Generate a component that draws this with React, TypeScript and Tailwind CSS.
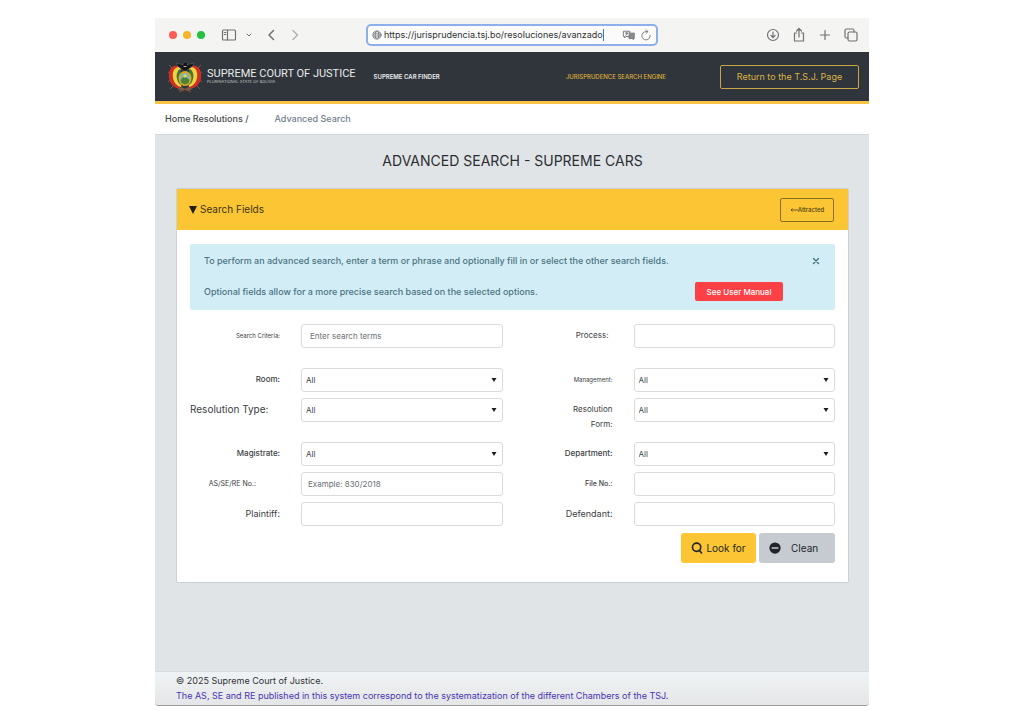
import type { ReactNode } from "react";

type Field = {
  id: string;
  label: string;
  labelClass: string;
  kind: "text" | "select";
  placeholder?: string;
  fieldClass?: string;
};

const rows: { tall?: boolean; fields: Field[] }[] = [
  {
    tall: true,
    fields: [
      { id: "criteria", label: "Search Criteria:", labelClass: "text-[6px] text-right", kind: "text", placeholder: "Enter search terms", fieldClass: "pl-2 text-[8px]" },
      { id: "process", label: "Process:", labelClass: "text-[8px] text-right pr-1", kind: "text" },
    ],
  },
  {
    fields: [
      { id: "room", label: "Room:", labelClass: "text-[8px] font-medium text-right", kind: "select" },
      { id: "management", label: "Management:", labelClass: "text-[6px] text-right", kind: "select" },
    ],
  },
  {
    tall: true,
    fields: [
      { id: "type", label: "Resolution Type:", labelClass: "text-[10px] whitespace-nowrap text-left", kind: "select" },
      { id: "form", label: "Resolution Form:", labelClass: "text-[8px] text-right pl-8", kind: "select" },
    ],
  },
  {
    fields: [
      { id: "magistrate", label: "Magistrate:", labelClass: "text-[8px] font-medium text-right", kind: "select" },
      { id: "department", label: "Department:", labelClass: "text-[8px] font-medium text-right", kind: "select" },
    ],
  },
  {
    fields: [
      { id: "number", label: "AS/SE/RE No.:", labelClass: "text-[7px] text-right pr-6", kind: "text", placeholder: "Example: 830/2018", fieldClass: "pl-1.5 text-[8px]" },
      { id: "file", label: "File No.:", labelClass: "text-[7px] font-medium text-right", kind: "text" },
    ],
  },
  {
    fields: [
      { id: "plaintiff", label: "Plaintiff:", labelClass: "text-[9px] text-right", kind: "text" },
      { id: "defendant", label: "Defendant:", labelClass: "text-[9px] text-right", kind: "text" },
    ],
  },
];

function FormField({ field }: { field: Field }) {
  return (
    <div className="grid grid-cols-[90px_minmax(0,1fr)] items-start gap-x-[21px]">
      <label htmlFor={field.id} className={`py-1 leading-[15px] text-[#3c4043] ${field.labelClass}`}>
        {field.label}
      </label>
      {field.kind === "select" ? (
        <div className="relative">
          <select id={field.id} className="block h-6 w-full appearance-none rounded-[3px] border border-[#d9dbdd] bg-white pl-1 text-[8px] text-[#3c4043]">
            <option>All</option>
          </select>
          <svg viewBox="0 0 6 4" className="pointer-events-none absolute top-2.5 right-1.5 h-1 w-1.5" aria-hidden="true">
            <path d="M.5 0h5L3 4z" fill="#1c1e20" />
          </svg>
        </div>
      ) : (
        <input
          id={field.id}
          type="text"
          placeholder={field.placeholder}
          className={`block h-6 w-full rounded-[3px] border border-[#d9dbdd] bg-white placeholder:text-[#6b7074] ${field.fieldClass ?? "pl-2 text-[8px]"}`}
        />
      )}
    </div>
  );
}

function Icon({ children, className }: { children: ReactNode; className: string }) {
  return (
    <svg viewBox="0 0 16 16" fill="none" stroke="currentColor" strokeWidth="1.2" strokeLinecap="round" strokeLinejoin="round" className={className} aria-hidden="true">
      {children}
    </svg>
  );
}

function Emblem() {
  return (
    <svg viewBox="0 0 36 34" className="h-[34px] w-9" aria-hidden="true">
      <path d="M5 8 2 5M3 13 1 12M3 20 1 22M6 26 3 29M31 8l3-3M33 13l2-1M33 20l2 2M30 26l3 3" stroke="#7a6a64" strokeWidth=".8" />
      <path d="M12 6C4 4 1 11 2 18c1 7 6 10 11 11l2-6c-3-4-4-10-1-15z" fill="#cf3024" />
      <path d="M12 7C7 7 5 12 6 18c1 5 4 8 8 9l1-4c-3-4-4-10-1-14z" fill="#f3d240" />
      <path d="M13 9c-3 2-4 6-3 10 1 4 3 6 5 6l1-3z" fill="#3c7b3a" />
      <path d="M24 6c8-2 11 5 10 12-1 7-6 10-11 11l-2-6c3-4 4-10 1-15z" fill="#cf3024" />
      <path d="M24 7c5 0 7 5 6 11-1 5-4 8-8 9l-1-4c3-4 4-10 1-14z" fill="#f3d240" />
      <path d="M23 9c3 2 4 6 3 10-1 4-3 6-5 6l-1-3z" fill="#3c7b3a" />
      <ellipse cx="18" cy="18.500" rx="6.500" ry="7.500" fill="#dca82c" />
      <ellipse cx="18" cy="18.500" rx="4.600" ry="5.600" fill="#74b8b8" />
      <path d="m13.500 20 4-4 5 4-1 3-3.500 1.500-3.500-1.500z" fill="#4f8037" />
      <circle cx="18" cy="16" r="1.600" fill="#f5dc55" />
      <path d="M18 11c-3 0-3-3-5-3-2-1-3-3-4-5 3 1 5 1 7 2 0-3 3-4 5-2l-1 2c2-1 4-1 7-2-1 3-2 4-4 5-2 0-2 3-5 3z" fill="#121416" stroke="#7d8184" strokeWidth=".4" />
      <path d="M16.500 6.500h3" stroke="#e4e4e4" strokeWidth=".8" />
      <path d="m10 29 5-2 3 2 3-2 5 2-5 2-3-1-3 1z" fill="#6f6048" />
      <path d="m12 32 6-3 6 3" stroke="#98483f" strokeWidth="1" fill="none" />
    </svg>
  );
}

function BrowserBar() {
  return (
    <div className="grid h-[34px] grid-cols-[1fr_292px_1fr] items-center bg-[#f4f4f3] text-[#6f7173]">
      <div className="flex items-center pl-3.5">
        <div className="flex gap-1.5">
          <span className="size-2 rounded-full bg-[#fb5b57]" />
          <span className="size-2 rounded-full bg-[#f6b42b]" />
          <span className="size-2 rounded-full bg-[#25c13f]" />
        </div>
        <button aria-label="Sidebar" className="ml-4">
          <Icon className="size-4">
            <rect x="1.500" y="3" width="13" height="10" rx="1" />
            <path d="M6.500 3v10M3.300 5.500h1.500M3.300 7.500h1.500" />
          </Icon>
        </button>
        <button aria-label="Tab groups" className="ml-2">
          <Icon className="size-2"><path d="m4 6 4 4 4-4" strokeWidth="2" /></Icon>
        </button>
        <button aria-label="Back" className="ml-2.5">
          <Icon className="size-4"><path d="M10.500 3.500 6 8l4.500 4.500" strokeWidth="1.500" /></Icon>
        </button>
        <button aria-label="Forward" className="ml-2 text-[#b3b4b5]">
          <Icon className="size-4"><path d="M6 3.500 10.500 8 6 12.500" strokeWidth="1.500" /></Icon>
        </button>
      </div>
      <div className="flex h-[22px] items-center rounded-[5px] border-2 border-[#8faeec] bg-[#fbfbfb] pr-1 pl-1">
        <Icon className="size-2.5 shrink-0">
          <circle cx="8" cy="8" r="6.500" />
          <ellipse cx="8" cy="8" rx="3" ry="6.500" />
          <path d="M1.500 8h13M2.500 5h11M2.500 11h11" />
        </Icon>
        <div className="ml-0.5 flex min-w-0 flex-1 items-center">
          <input aria-label="Address" defaultValue="https://jurisprudencia.tsj.bo/resoluciones/avanzado" className="field-sizing-content min-w-0 bg-transparent text-[9px] text-[#303234] outline-none" />
          <span className="h-3 w-px bg-[#2d7be0]" />
        </div>
        <Icon className="h-3 w-3.5">
          <path d="M1 3h8v7H4l-2 2v-2H1zM3 5.500h4M5 4.500v1M3.500 8.500 6.500 6" />
          <path d="M9 5.500h6v7h-1V14l-2-1.500H8V8" fill="#8a8c8e" />
        </Icon>
        <Icon className="ml-1 size-3"><path d="M13.500 8.500A5.500 5.500 0 1 1 8 3.500h2M8 1l2.500 2.500L8 6" /></Icon>
      </div>
      <div className="flex items-center justify-end gap-2.5 pr-2.5">
        <button aria-label="Downloads"><Icon className="size-4"><circle cx="8" cy="8" r="5.500" /><path d="M8 5v5.500M6 8.500l2 2 2-2" /></Icon></button>
        <button aria-label="Share"><Icon className="size-4"><path d="M5.500 6h-2v8h9V6h-2M8 10V1.500M5.500 4 8 1.500 10.500 4" /></Icon></button>
        <button aria-label="New tab"><Icon className="size-4"><path d="M8 3.500v9M3.500 8h9" /></Icon></button>
        <button aria-label="Tabs"><Icon className="size-4"><rect x="5" y="5" width="9" height="9" rx="1.500" /><path d="M5 11H3.500A1.500 1.500 0 0 1 2 9.500v-6A1.500 1.500 0 0 1 3.500 2h6A1.500 1.500 0 0 1 11 3.500V5" /></Icon></button>
      </div>
    </div>
  );
}

export default function App() {
  return (
    <div className="flex min-h-screen flex-col bg-white px-[155px] py-[18px] font-['Inter',sans-serif]">
      <div className="flex flex-1 flex-col overflow-hidden rounded-b-[4px] border-b border-[#9a9c9d] bg-[#e1e4e7]">
        <BrowserBar />
        <header className="flex h-[52px] items-center border-b-[3px] border-[#f6c347] bg-[#2f353a] pr-2.5 pl-3">
          <Emblem />
          <div className="ml-1">
            <div className="font-['Roboto',sans-serif] text-[11px] leading-[10px] text-[#e9ebec]">SUPREME COURT OF JUSTICE</div>
            <div className="text-[4px] leading-[6px] text-[#c3c6c8]">PLURINATIONAL STATE OF BOLIVIA</div>
          </div>
          <a href="#finder" className="ml-[18px] text-[6px] font-semibold text-[#e9ebec]">SUPREME CAR FINDER</a>
          <a href="#engine" className="mr-[54px] ml-auto text-[6px] font-medium text-[#dcae3c]">JURISPRUDENCE SEARCH ENGINE</a>
          <a href="#home" className="flex h-6 w-[139px] items-center justify-center rounded-[2px] border border-[#c8a545] text-[9px] text-[#d9b448]">Return to the T.S.J. Page</a>
        </header>
        <nav aria-label="Breadcrumb" className="flex h-[31px] items-center gap-[26px] border-b border-[#d5d8da] bg-white px-2.5 text-[9px] font-medium">
          <a href="#resolutions" className="text-[#45484b]">Home Resolutions /</a>
          <span className="text-[#71808d]">Advanced Search</span>
        </nav>
        <main className="flex-1 pr-5 pl-[21px]">
          <h1 className="pt-4 text-center text-[14px] leading-5 text-[#2b2e31]">ADVANCED SEARCH - SUPREME CARS</h1>
          <section className="mt-[17px] rounded-[2px] border border-[#cdd1d5] bg-white">
            <div className="flex h-[41px] items-center justify-between bg-[#fbc533] pr-3.5 pl-3">
              <h2 className="flex items-center gap-[3px] text-[10px] text-[#3c3416]">
                <svg viewBox="0 0 8 8" className="size-2" aria-hidden="true"><path d="M0 0h8L4 8z" fill="#221d0c" /></svg>
                Search Fields
              </h2>
              <button className="flex h-6 w-[54px] items-center justify-center rounded-[2px] border border-[#8a7024] text-[6px] font-medium text-[#4a3e18]">
                <svg viewBox="0 0 8 6" className="h-1.5 w-2" fill="none" stroke="currentColor" strokeWidth=".8" aria-hidden="true"><path d="M8 3H1M2.500 1.500 1 3l1.500 1.500" /></svg>
                Attracted
              </button>
            </div>
            <div className="px-[13px] pt-3.5 pb-[19px]">
              <div className="flex h-[66px] flex-col justify-between rounded-[2px] bg-[#d2edf6] px-3.5 pt-2 pb-[9px] text-[9px] font-medium text-[#4b7482]">
                <div className="flex h-[18px] items-center justify-between">
                  <p>To perform an advanced search, enter a term or phrase and optionally fill in or select the other search fields.</p>
                  <button aria-label="Close"><Icon className="size-2.5"><path d="m4 4 8 8M12 4l-8 8" strokeWidth="2.200" /></Icon></button>
                </div>
                <div className="flex h-[19px] items-center justify-between pr-[38px]">
                  <p>Optional fields allow for a more precise search based on the selected options.</p>
                  <button className="h-[19px] w-[88px] rounded-[2px] bg-[#fb4145] text-[8px] text-white">See User Manual</button>
                </div>
              </div>
              <form className="mt-3.5">
                <div className="flex flex-col gap-1.5">
                  {rows.map((row) => (
                    <div key={row.fields[0].id} className={`grid grid-cols-2 gap-x-5 ${row.tall ? "h-[38px]" : "h-6"}`}>
                      {row.fields.map((field) => (
                        <FormField key={field.id} field={field} />
                      ))}
                    </div>
                  ))}
                </div>
                <div className="mt-[7px] flex justify-end gap-[3px] text-[10px] text-[#24272a]">
                  <button type="submit" className="flex h-[30px] w-[75px] items-center justify-center gap-[3px] rounded-[3px] bg-[#fbc533]">
                    <Icon className="size-3"><circle cx="7.500" cy="7" r="5.500" strokeWidth="2.200" /><path d="m11 11 3 3.500" strokeWidth="2.200" /></Icon>
                    Look for
                  </button>
                  <button type="reset" className="flex h-[30px] w-[76px] items-center gap-2.5 rounded-[3px] bg-[#c6cbd1] pl-2.5">
                    <svg viewBox="0 0 16 16" className="size-3" aria-hidden="true"><circle cx="8" cy="8" r="7.500" fill="#202327" /><path d="M3.500 8h9" stroke="#c6cbd1" strokeWidth="2.200" /></svg>
                    Clean
                  </button>
                </div>
              </form>
            </div>
          </section>
        </main>
        <footer className="border-t border-[#d8dbdd] bg-linear-to-b from-[#f0f3f5] to-[#e4e6e7] px-[21px] pt-px pb-0.5 text-[9px] leading-[15px]">
          <p className="text-[#303336]">© 2025 Supreme Court of Justice.</p>
          <p className="text-[#4a33b5]">The AS, SE and RE published in this system correspond to the systematization of the different Chambers of the TSJ.</p>
        </footer>
      </div>
    </div>
  );
}
